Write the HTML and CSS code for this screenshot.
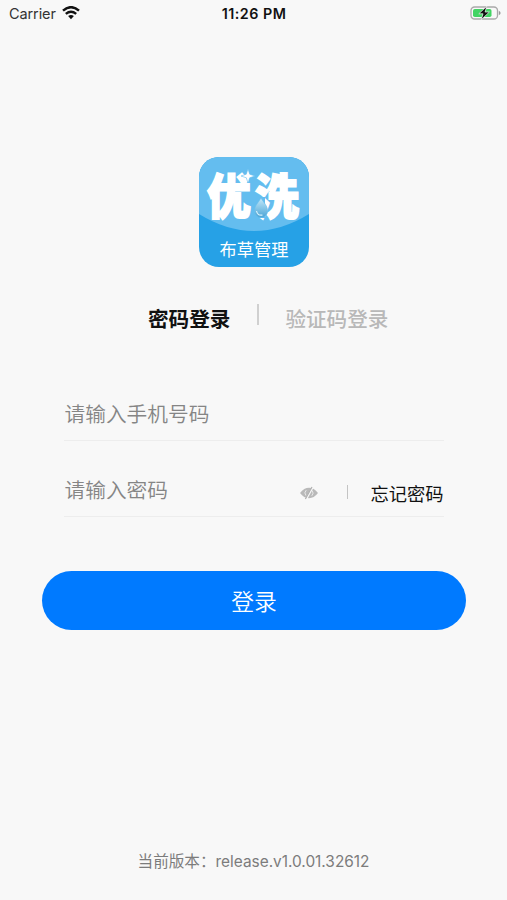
FILE: index.html
```html
<!DOCTYPE html>
<html lang="zh-CN">
<head>
<meta charset="utf-8">
<meta name="viewport" content="width=device-width, initial-scale=1">
<title>登录</title>
<link rel="stylesheet" href="styles.css">
</head>
<body>
<div class="screen">
  <header class="status">
    <div class="status-left">
      <span class="carrier">Carrier</span>
      <svg class="wifi" width="18" height="14" viewBox="0 0 18 14" fill="none" stroke="#111">
        <path d="M1 4.6Q9-2.2 17 4.6" stroke-width="2.5"/>
        <path d="M3.8 7.8Q9 3.5 14.2 7.8" stroke-width="2.4"/>
        <path d="M6.1 10.1Q9 7.7 11.9 10.1L9 13.2Z" fill="#111" stroke="none"/>
      </svg>
    </div>
    <span class="clock">11:26 PM</span>
    <div class="status-right">
      <svg width="31" height="16" viewBox="0 0 31 16">
        <rect x="1" y="2" width="26.5" height="12" rx="3.6" fill="#f8f8f8" stroke="#a9a9a9" stroke-width="1.3"/>
        <rect x="3" y="4" width="18.5" height="8" rx="1.8" fill="#42d463"/>
        <path d="M28.8 5.8Q30.6 6.6 30.6 8T28.8 10.2Z" fill="#999"/>
        <path d="M16.8 1.2L8.8 8.8H13L11.2 14.8L19.4 7H15.1Z" fill="#111" stroke="#f8f8f8" stroke-width=".7"/>
      </svg>
    </div>
  </header>
  <main class="content">
    <svg class="logo" width="110" height="110" viewBox="0 0 110 110">
      <defs>
        <clipPath id="tile"><rect width="110" height="110" rx="20"/></clipPath>
        <linearGradient id="drop" x1="0" y1="0" x2="0" y2="1"><stop offset="0" stop-color="#c4e8f9"/><stop offset="1" stop-color="#4ba5d6"/></linearGradient>
      </defs>
      <g clip-path="url(#tile)">
        <rect width="110" height="110" fill="#26a1e6"/>
        <path d="M0 0H110V57Q55 91 0 57Z" fill="#64bdef"/>
      </g>
      <g class="brand">
        <text transform="translate(8 56.5) scale(.95 1.04)">优</text>
        <text transform="translate(56 56.5) scale(.95 1.04)">洗</text>
      </g>
      <path d="M49 12L50.7 17.2L56 19L50.7 20.8L49 26L47.3 20.8L42 19L47.3 17.2Z" fill="#fff" stroke="#64bdef" stroke-width=".6"/>
      <path d="M55 40H66V61H55Z" fill="#64bdef"/>
      <path d="M62 41C65 46 68.6 49 68.6 54A6.6 6.6 0 0 1 55.4 54C55.4 49 59 46 62 41Z" fill="url(#drop)" stroke="#64bdef" stroke-width=".6"/>
      <path d="M57.5 54Q58.5 59 63.5 58" fill="none" stroke="#d8f1fb" stroke-width="1.2"/>
      <text class="tagline" x="55" y="98.5" text-anchor="middle">布草管理</text>
    </svg>
    <nav class="tabs">
      <span class="tab tab-active">密码登录</span>
      <i class="tab-rule"></i>
      <span class="tab">验证码登录</span>
    </nav>
    <form class="form">
      <label class="field"><span class="hint">请输入手机号码</span></label>
      <label class="field">
        <span class="hint">请输入密码</span>
        <span class="extras">
          <svg class="eye" width="18" height="14" viewBox="0 0 18 14">
            <path d="M0 7Q4 1.8 9 1.8T18 7Q14 12.2 9 12.2T0 7Z" fill="#b9b9b9"/>
            <path d="M6.2 4.2A4 4 0 0 0 6 9.6M11.8 9.8A4 4 0 0 0 12 4.4" fill="none" stroke="#eee" stroke-width=".9"/>
            <path d="M12.9 1L6.3 13" stroke="#f8f8f8" stroke-width="1.8"/>
            <path d="M12 1L5.4 13" stroke="#b0b0b0" stroke-width="1.2"/>
          </svg>
          <i class="extras-rule"></i>
          <span class="forgot">忘记密码</span>
        </span>
      </label>
    </form>
    <button class="submit" type="button">登录</button>
  </main>
  <footer class="version">当前版本：<span class="build">release.v1.0.01.32612</span></footer>
</div>
</body>
</html>
```
FILE: styles.css
```css
* { box-sizing: border-box; }
body {
  margin: 0;
  background: #f8f8f8;
  color: #111;
  font-family: "Noto Sans CJK SC", sans-serif;
}
.screen { height: 900px; display: flex; flex-direction: column; overflow: hidden; }
.status {
  height: 27px;
  padding: 0 6px 0 9px;
  display: grid;
  grid-template-columns: 1fr auto 1fr;
  align-items: center;
  font-family: Inter, sans-serif;
}
.status-left { display: flex; align-items: center; gap: 6px; }
.wifi { margin-top: -2px; }
.carrier { font-size: 14.5px; letter-spacing: -.1px; color: #333; }
.clock { font-size: 14.3px; font-weight: 600; letter-spacing: .5px; margin-right: 2px; }
.status-right { display: flex; justify-content: flex-end; margin-top: -1px; }
.content { flex: 1; display: flex; flex-direction: column; align-items: center; padding-top: 130px; }
.logo { display: block; margin-left: 1px; }
.brand text { font-size: 46px; font-weight: 900; fill: #fff; stroke: #fff; stroke-width: 1.8px; }
.tagline { font-size: 17.2px; font-weight: 400; fill: #fff; }
.tabs {
  width: 507px;
  height: 40px;
  margin-top: 31px;
  padding-left: 148px;
  display: flex;
  align-items: center;
  font-size: 20.6px;
  line-height: 40px;
}
.tab { color: #b8b8b8; font-weight: 500; white-space: nowrap; }
.tab-active { color: #111; font-weight: 700; }
.tab-rule { width: 2px; height: 21px; margin: 0 26px 7px 27px; background: #d0d0d0; }
.form { width: 380px; margin-top: 26px; }
.field {
  height: 76.5px;
  display: flex;
  align-items: flex-end;
  justify-content: space-between;
  padding-bottom: 12px;
  border-bottom: 1px solid #ededed;
}
.hint { padding-left: 1px; font-size: 20.7px; line-height: 30px; color: #858585; font-weight: 350; }
.extras { display: flex; align-items: center; height: 28px; margin-bottom: -3px; }
.extras-rule { width: 1px; height: 14px; margin: 0 22px 3px 29px; background: #c4c4c4; }
.forgot { font-size: 18.3px; line-height: 28px; }
.submit {
  width: 424px;
  height: 59px;
  margin: 54px 0 0 1px;
  border: 0;
  border-radius: 30px;
  background: #007aff;
  color: #fff;
  font: 350 22.8px/59px "Noto Sans CJK SC", sans-serif;
  padding: 0;
}
.version { height: 53px; text-align: center; font-size: 15.6px; line-height: 26px; color: #7c7c7c; }
.build { font-family: Inter, sans-serif; font-size: 15.4px; }
```
